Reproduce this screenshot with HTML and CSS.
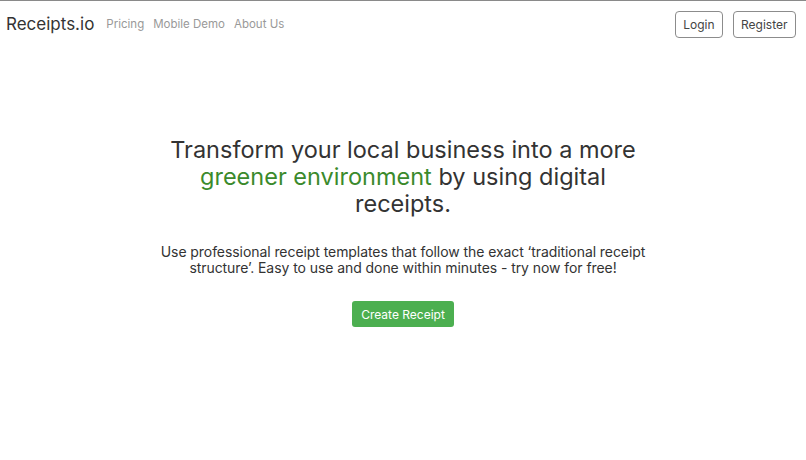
FILE: index.html
```html
<!DOCTYPE html>
<html>
<head>
<meta charset="utf-8">
<link rel="stylesheet" href="styles.css">
</head>
<body>
<nav class="navbar">
  <div class="nav-left">
    <span class="brand">Receipts.io</span>
    <a class="nav-link" href="#">Pricing</a>
    <a class="nav-link" href="#">Mobile Demo</a>
    <a class="nav-link" href="#">About Us</a>
  </div>
  <div class="nav-right">
    <button class="btn-outline btn-login">Login</button>
    <button class="btn-outline">Register</button>
  </div>
</nav>
<main class="hero">
  <h1 class="title">Transform your local business into a more <span class="green">greener environment</span> by using digital receipts.</h1>
  <p class="lead">Use professional receipt templates that follow the exact ‘traditional receipt structure’. Easy to use and done within minutes - try now for free!</p>
  <button class="btn-primary">Create Receipt</button>
</main>
</body>
</html>
```
FILE: styles.css
```css
html, body {
  margin: 0;
  padding: 0;
  background: #fff;
  font-family: Inter, "Open Sans", sans-serif;
  color: #333;
}
body {
  border-top: 1px solid #8a8a8a;
}
.navbar {
  display: flex;
  justify-content: space-between;
  align-items: center;
  height: 46px;
  padding: 0 10px 0 6px;
}
.nav-left {
  display: flex;
  align-items: center;
  gap: 9px;
}
.brand {
  font-size: 17px;
  color: #333;
  margin-right: 3px;
  font-weight: 400;
}
.nav-link {
  font-size: 11.5px;
  color: #999;
  text-decoration: none;
}
.nav-right {
  display: flex;
  gap: 10px;
}
.btn-outline {
  font-family: inherit;
  font-size: 12px;
  color: #444;
  background: #fff;
  border: 1px solid #8c8c8c;
  border-radius: 4px;
  height: 27px;
  padding: 0 7.5px;
}
.btn-login {
  padding: 0 7px;
}
.hero {
  display: flex;
  flex-direction: column;
  align-items: center;
  text-align: center;
  padding-top: 89px;
}
.title {
  margin: 0;
  font-size: 23.5px;
  line-height: 27px;
  font-weight: 400;
  width: 490px;
  color: #333;
}
.green {
  color: #3b8a2c;
}
.lead {
  margin: 27px 0 0;
  font-size: 14px;
  line-height: 15.5px;
  letter-spacing: -0.07px;
  width: 520px;
  color: #333;
}
.btn-primary {
  margin-top: 26px;
  font-family: inherit;
  font-size: 12px;
  color: #fff;
  background: #4caf50;
  border: none;
  border-radius: 3px;
  height: 26px;
  padding: 0 9px;
}
```
